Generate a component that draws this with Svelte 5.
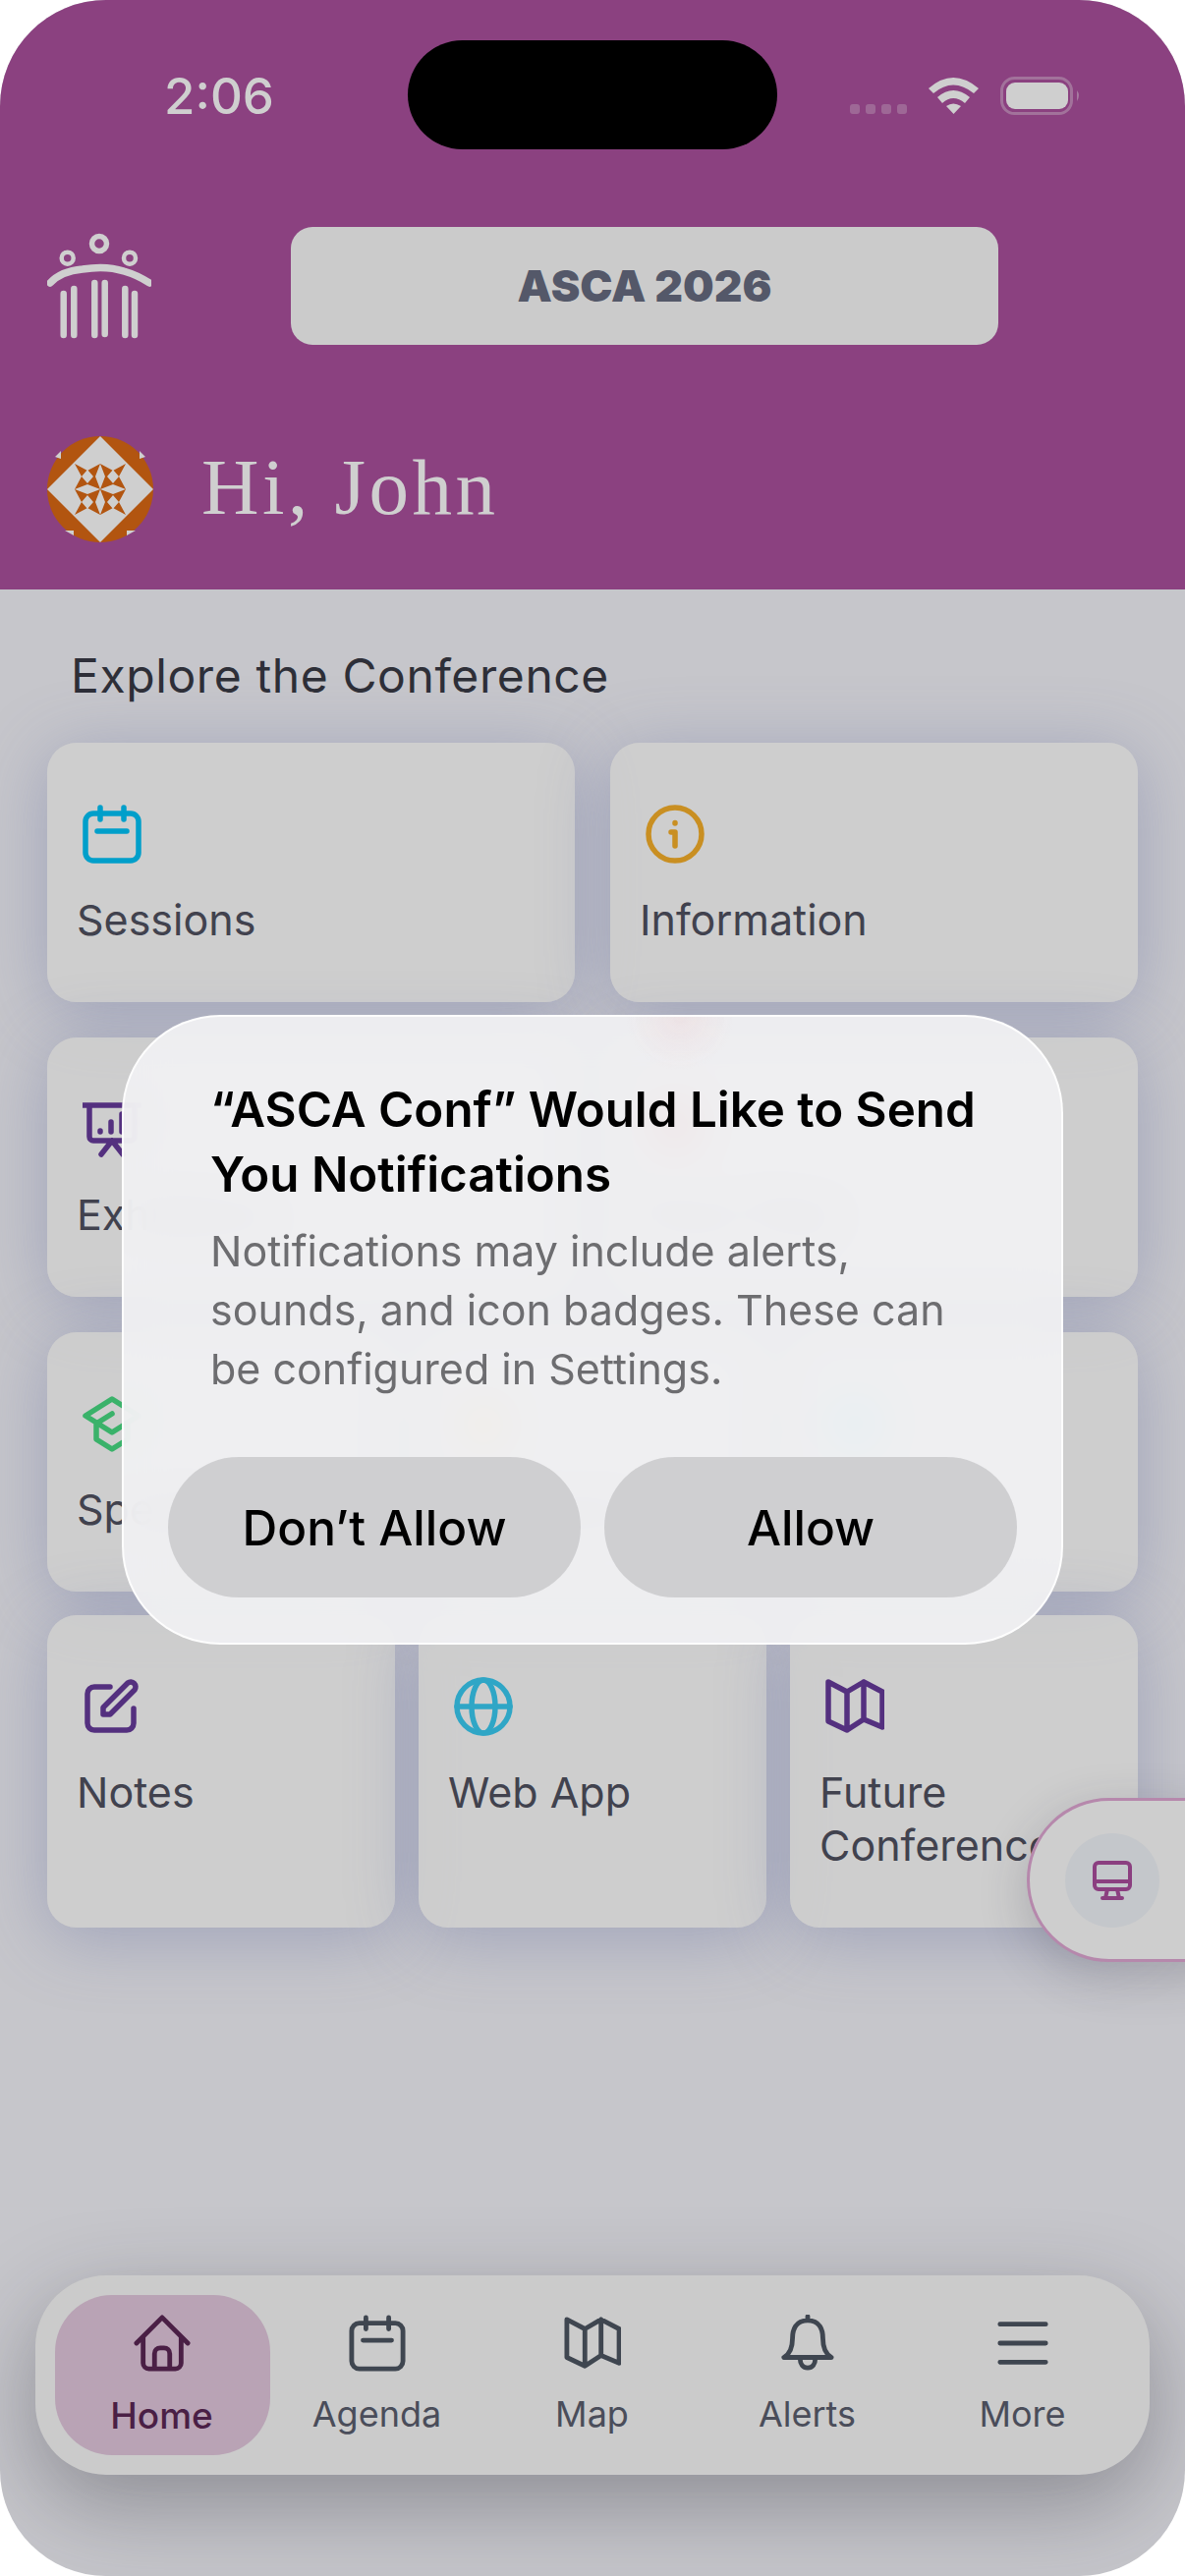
<script>
  const nav = [
    { id: 'home', label: 'Home', active: true },
    { id: 'calendar', label: 'Agenda' },
    { id: 'map', label: 'Map' },
    { id: 'bell', label: 'Alerts' },
    { id: 'menu', label: 'More' }
  ];
</script>

{#snippet calendar()}
  <rect x="3" y="9" width="54" height="48" rx="8" />
  <path d="M18 3V15M42 3V15M15 27H45" />
{/snippet}
{#snippet mapIcon()}
  <path d="M3 5L22 15L39 5L58 15V51L39 43L22 54L3 45ZM22 15V54M39 5V43" />
{/snippet}

<div class="phone">
  <header class="header">
    <div class="status">
      <span class="time">2:06</span>
      <div class="island"></div>
      <svg class="status-icons" viewBox="865 78 236 40" width="236" height="40" aria-hidden="true">
        <g fill="#cfcfcf" opacity=".28">
          <rect x="865" y="106" width="10" height="10" rx="3" />
          <rect x="881" y="106" width="10" height="10" rx="3" />
          <rect x="897" y="106" width="10" height="10" rx="3" />
          <rect x="913" y="106" width="10" height="10" rx="3" />
        </g>
        <path fill="#cfcfcf" d="M945 90Q970 68 996 90L991 95Q970 78 950 95ZM954 99Q970 85 987 99L982 105Q970 95 959 105ZM963 108Q970 103 978 108L970.500 116Z" />
        <rect x="1019.500" y="79.500" width="71" height="36" rx="13" fill="none" stroke="#cfcfcf" stroke-opacity=".35" stroke-width="3" />
        <rect x="1024" y="84" width="63" height="27" rx="9" fill="#cfcfcf" />
        <path d="M1096 92Q1100 97 1096 103Z" fill="#cfcfcf" opacity=".4" />
      </svg>
    </div>

    <div class="brand-row">
      <svg class="logo" viewBox="48 237 106 108" aria-hidden="true">
        <g fill="none" stroke="#cfcfcf">
          <circle cx="101" cy="248" r="7.500" stroke-width="5.500" />
          <circle cx="68.700" cy="262.700" r="6" stroke-width="4.500" />
          <circle cx="132" cy="262.700" r="6" stroke-width="4.500" />
          <path d="M51 288Q62 276 84 274Q108 270 126 276Q140 280 152 288" stroke-width="7.500" stroke-linecap="round" />
          <path d="M64.700 299V341M75.300 294V341M96.300 288V341M106.700 288V340M127.300 294V341M137 299V341" stroke-width="6.500" stroke-linecap="round" />
        </g>
      </svg>
      <div class="conf-button">ASCA 2026</div>
    </div>

    <div class="greeting">
      <svg class="avatar" viewBox="0 0 108 108" aria-hidden="true">
        <circle cx="54" cy="54" r="54" fill="#b25510" />
        <path d="M54 0L108 54L54 108L0 54Z" fill="#cfcfcf" />
        <path d="M8 21L14 15V23ZM100 21L94 15V23ZM18 96L27 96L27 101ZM90 96L81 96L81 101Z" fill="#cfcfcf" />
        <path fill="#b25510" d="M28 28L41 35L54 28L67 35L80 28L73 41L80 54L73 67L80 80L67 73L54 80L41 73L28 80L35 67L28 54L35 41Z" />
        <path fill="#cfcfcf" d="M54 28L59 41L54 54L49 41ZM54 54L59 67L54 80L49 67ZM28 54L41 49L54 54L41 59ZM54 54L67 49L80 54L67 59ZM41 34L47 41L41 48L35 41ZM67 34L73 41L67 48L61 41ZM41 60L47 67L41 74L35 67ZM67 60L73 67L67 74L61 67Z" />
      </svg>
      <h1>Hi, John</h1>
    </div>
  </header>

  <main class="main">
    <h2>Explore the Conference</h2>

    <section class="grid two">
      <div class="card">
        <svg class="ic cyan" viewBox="0 0 60 60" aria-hidden="true">{@render calendar()}</svg>
        <span>Sessions</span>
      </div>
      <div class="card">
        <svg class="ic amber" viewBox="0 0 60 60" aria-hidden="true">
          <circle cx="30" cy="30" r="27" />
          <path d="M26 28H30V42M30 18.500V19" />
        </svg>
        <span>Information</span>
      </div>
      <div class="card">
        <svg class="ic purple" viewBox="0 0 60 60" aria-hidden="true">
          <path d="M1 6H59M7 6V38a4 4 0 0 0 4 4H49a4 4 0 0 0 4-4V6M30 42L19 56M30 42L41 56M18 32V33M29 23V33M40 15V33" />
        </svg>
        <span>Exhibitors</span>
      </div>
      <div class="card">
        <svg class="ic red" viewBox="0 0 60 60" aria-hidden="true">
          <path d="M30 56C30 56 52 38 52 24A22 22 0 0 0 8 24C8 38 30 56 30 56Z" />
        </svg>
        <span>Floor Plan</span>
      </div>
    </section>

    <section class="grid three">
      <div class="card">
        <svg class="ic green" viewBox="0 0 60 60" aria-hidden="true">
          <path d="M3 22L30 5L57 22L30 39ZM14 30V46L30 56L46 46V30M14 30L30 20" />
        </svg>
        <span>Speakers</span>
      </div>
      <div class="card">
        <svg class="ic yellow" viewBox="0 0 60 60" aria-hidden="true">
          <path d="M30 5L37 22L55 23L41 35L46 53L30 43L14 53L19 35L5 23L23 22Z" />
        </svg>
        <span>Sponsors</span>
      </div>
      <div class="card">
        <svg class="ic skyfill" viewBox="0 0 60 60" aria-hidden="true">
          <circle cx="30" cy="30" r="27" />
        </svg>
        <span>Posters</span>
      </div>
      <div class="card tall">
        <svg class="ic purple" viewBox="0 0 60 60" aria-hidden="true">
          <path d="M28 10H12a7 7 0 0 0-7 7V47a7 7 0 0 0 7 7H45a7 7 0 0 0 7-7V32M21 31V38H28L53 13a5 5 0 0 0-7-7Z" />
        </svg>
        <span>Notes</span>
      </div>
      <div class="card tall">
        <svg class="ic sky" viewBox="0 0 60 60" aria-hidden="true">
          <circle cx="30" cy="30" r="27" />
          <ellipse cx="30" cy="30" rx="12" ry="27" />
          <path d="M3 30H57" />
        </svg>
        <span>Web App</span>
      </div>
      <div class="card tall">
        <svg class="ic purple" viewBox="0 0 60 60" aria-hidden="true">{@render mapIcon()}</svg>
        <span>Future<br />Conference</span>
      </div>
    </section>

    <nav class="nav">
      {#each nav as item}
        <div class="nav-item" class:active={item.active}>
          <svg class="nav-ic" viewBox="0 0 60 60" aria-hidden="true">
            {#if item.id === 'home'}
              <path d="M3 30L30 3L57 30M10 24V51a6 6 0 0 0 6 6H44a6 6 0 0 0 6-6V24M22 57V41a6 6 0 0 1 6-6H32a6 6 0 0 1 6 6V57" />
            {:else if item.id === 'calendar'}
              {@render calendar()}
            {:else if item.id === 'map'}
              {@render mapIcon()}
            {:else if item.id === 'bell'}
              <path d="M30 2V6M30 6C17 6 14 16 14 25C14 36 10 42 5 45H55C50 42 46 36 46 25C46 16 43 6 30 6ZM22 46C22 52 25 56 30 56C35 56 38 52 38 46" />
            {:else}
              <path d="M6 10H54M6 30H54M6 50H54" />
            {/if}
          </svg>
          <span>{item.label}</span>
        </div>
      {/each}
    </nav>
  </main>

  <aside class="pill">
    <div class="pill-circle">
      <svg viewBox="0 0 40 40" width="40" height="40" aria-hidden="true">
        <rect x="2" y="2" width="36" height="27" rx="4" />
        <path d="M2 21H38M15 29L13 38M25 29L27 38M10 38H30" />
      </svg>
    </div>
  </aside>

  <div class="dialog" role="alertdialog">
    <h3>“ASCA Conf” Would Like to Send<br />You Notifications</h3>
    <p>Notifications may include alerts, sounds, and icon badges. These can be configured in Settings.</p>
    <div class="actions">
      <button>Don’t Allow</button>
      <button>Allow</button>
    </div>
  </div>
</div>

<style>
  :global(body) {
    margin: 0;
    background: #fff;
  }

  .phone {
    position: relative;
    width: 1206px;
    height: 2622px;
    overflow: hidden;
    border-radius: 108px;
    background: #c6c6cb;
    font-family: Inter, "Liberation Sans", sans-serif;
  }

  .header {
    height: 600px;
    box-sizing: border-box;
    background: #8b4180;
    color: #cfcfcf;
    padding: 0 48px;
  }

  .status {
    position: relative;
    height: 231px;
  }

  .time {
    position: absolute;
    left: 119px;
    top: 68px;
    font-size: 51px;
    line-height: 60px;
    font-weight: 500;
  }

  .island {
    position: absolute;
    left: 367px;
    top: 41px;
    width: 376px;
    height: 111px;
    border-radius: 56px;
    background: #000;
  }

  .status-icons {
    position: absolute;
    left: 817px;
    top: 78px;
  }

  .brand-row {
    display: flex;
    align-items: center;
    height: 120px;
  }

  .logo {
    width: 106px;
    height: 108px;
    flex: none;
    margin-right: 142px;
  }

  .conf-button {
    width: 720px;
    height: 120px;
    border-radius: 22px;
    background: #cbcbcb;
    color: #545869;
    display: flex;
    align-items: center;
    justify-content: center;
    font-size: 44.500px;
    font-weight: 900;
  }

  .greeting {
    display: flex;
    align-items: center;
    margin-top: 93px;
  }

  .avatar {
    width: 108px;
    height: 108px;
    flex: none;
  }

  h1 {
    margin: -4px 0 0 49px;
    font-family: "Liberation Serif", serif;
    font-weight: 400;
    font-size: 81px;
    line-height: 90px;
    letter-spacing: 3.500px;
  }

  .main {
    height: 2022px;
    box-sizing: border-box;
    padding: 60px 48px 0;
    position: relative;
  }

  h2 {
    margin: 0 0 40px 24px;
    font-size: 48px;
    line-height: 56px;
    font-weight: 400;
    letter-spacing: 0.6px;
    color: #2e2f38;
  }

  .grid {
    display: grid;
  }

  .two {
    grid-template-columns: 1fr 1fr;
    gap: 36px;
  }

  .three {
    grid-template-columns: repeat(3, 1fr);
    gap: 24px;
    margin-top: 36px;
  }

  .card {
    box-sizing: border-box;
    height: 264px;
    border-radius: 30px;
    padding: 63px 20px 0 30px;
    background: rgba(208, 208, 206, 0.82);
    box-shadow: 0 10px 70px rgba(90, 100, 155, 0.36);
    color: #41424e;
    font-size: 43px;
    line-height: 54px;
  }

  .tall {
    height: 318px;
  }

  .card span {
    display: block;
    margin-top: 30px;
    white-space: nowrap;
  }

  .ic {
    display: block;
    width: 60px;
    height: 60px;
    margin-left: 6px;
    fill: none;
    stroke-width: 5.500;
    stroke-linecap: round;
    stroke-linejoin: round;
  }

  .cyan { stroke: #009fca; }
  .amber { stroke: #c98f22; }
  .purple { stroke: #54307f; }
  .red { stroke: #e0504a; fill: #e0504a; }
  .green { stroke: #3ab26a; }
  .yellow { stroke: #eeb02d; fill: #eeb02d; }
  .sky { stroke: #2fa6c6; }
  .skyfill { stroke: #6fd0e8; fill: #6fd0e8; }

  .nav {
    display: grid;
    grid-template-columns: repeat(5, 219px);
    height: 203px;
    box-sizing: border-box;
    width: 1134px;
    margin: 354px 0 0 -12px;
    padding: 20px;
    border-radius: 72px;
    background: #cbcbcb;
    box-shadow: 0 30px 90px rgba(40, 40, 50, 0.36);
  }

  .nav-item {
    display: flex;
    flex-direction: column;
    align-items: center;
    height: 163px;
    box-sizing: border-box;
    padding: 20px 2px 0 0;
    border-radius: 58px;
    color: #4a4d5a;
    font-size: 36px;
    line-height: 44px;
  }

  .nav-item span {
    margin-top: 21px;
  }

  .nav-ic {
    width: 58px;
    height: 58px;
    fill: none;
    stroke: #3f4650;
    stroke-width: 5;
    stroke-linecap: round;
    stroke-linejoin: round;
  }

  .active {
    background: #b9a3b5;
    color: #4a1f45;
    font-weight: 500;
    font-size: 37px;
  }

  .active .nav-ic {
    stroke: #4a1f45;
  }

  .active span {
    margin-top: 23px;
  }

  .pill {
    position: absolute;
    left: 1045px;
    top: 1830px;
    width: 240px;
    height: 167px;
    box-sizing: border-box;
    border: 3px solid #b688ac;
    border-radius: 84px;
    background: #cecece;
    box-shadow: 0 14px 50px rgba(40, 40, 60, 0.22);
    display: flex;
    align-items: center;
    padding-left: 36px;
  }

  .pill-circle {
    width: 96px;
    height: 96px;
    border-radius: 50%;
    background: #c4c7cb;
    display: flex;
    align-items: center;
    justify-content: center;
  }

  .pill-circle svg {
    fill: none;
    stroke: #8b3f80;
    stroke-width: 4;
    stroke-linecap: round;
    stroke-linejoin: round;
  }

  .dialog {
    position: absolute;
    left: 124px;
    top: 1033px;
    width: 958px;
    height: 641px;
    box-sizing: border-box;
    padding: 61px 45px 0;
    border: 2px solid rgba(255, 255, 255, 0.9);
    border-radius: 100px;
    background:
      radial-gradient(circle 55px at 566px 0, rgba(235, 170, 170, 0.16), transparent),
      rgba(241, 241, 243, 0.93);
    backdrop-filter: blur(22px);
  }

  h3 {
    margin: 0 0 0 43px;
    font-size: 49.300px;
    line-height: 66px;
    font-weight: 600;
    color: #000;
    white-space: nowrap;
  }

  p {
    margin: 15px 43px 0;
    font-size: 43px;
    line-height: 60px;
    color: #6d6d70;
  }

  .actions {
    display: grid;
    grid-template-columns: 420px 420px;
    gap: 24px;
    margin-top: 60px;
  }

  button {
    height: 143px;
    border: 0;
    padding: 0;
    border-radius: 72px;
    background: rgba(204, 204, 206, 0.9);
    color: #000;
    font: 500 49.500px Inter, "Liberation Sans", sans-serif;
  }
</style>
